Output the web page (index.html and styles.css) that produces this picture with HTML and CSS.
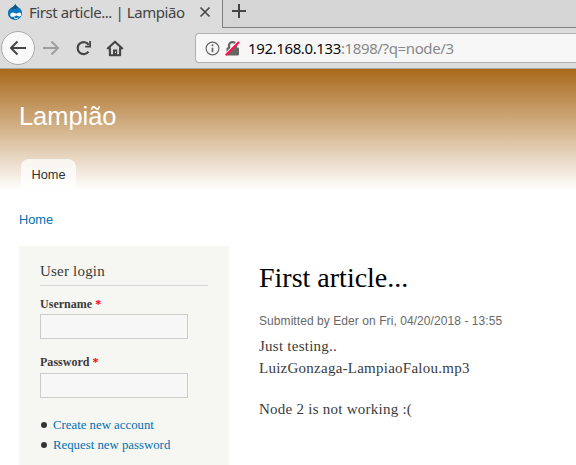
FILE: index.html
```html
<!DOCTYPE html>
<html lang="en">
<head>
<meta charset="utf-8">
<title>First article... | Lampião</title>
<link rel="stylesheet" href="styles.css">
</head>
<body>
<div class="browser">
  <div class="tabs">
    <div class="tab">
      <svg class="favicon" width="16" height="18" viewBox="0 0 16 18"><path d="M8.200 .8C9 2.800 10.700 3.700 12 4.800c2 1.400 3.100 3.100 3.100 5.300 0 3.900-3 6.800-7.100 6.800S.9 14 .9 10.100c0-2.600 1.500-4.300 3.600-5.500C6.300 3.500 7.800 2.800 8.200.8Z" fill="#0876bd"/><path d="M8.200 1c.5 1.700 1.600 2.700 3 3.500-2.100 1.600-5.500 1.200-8 2.100C5.200 4.300 7.800 3.500 8.200 1Z" fill="#16527c"/><path d="M3.200 11.800c0-1.700 1.400-2.400 2.600-2.400 1.700 0 2.600 1.200 3.600 1.200s1.700-1.200 3-1.200c1.200 0 1.900.9 1.900 1.900 0 1.400-.8 2.200-1.800 2.200-1.200 0-2-1-3-1-1.100 0-2 1.600-3.600 1.600s-2.700-1-2.700-2.300Z" fill="#fff"/><path d="M7 14.800c1.200.9 3 .9 4.200 0" fill="none" stroke="#fff" stroke-width="1"/></svg>
      <span class="tab-title">First article... | Lampião</span>
      <svg class="close" width="12" height="12" viewBox="0 0 12 12"><path d="M1.500 1.500l9 9M10.500 1.500l-9 9" stroke="#4a4a4a" stroke-width="1.700"/></svg>
    </div>
    <div class="tab-rest"><svg width="16" height="16" viewBox="0 0 16 16"><path d="M8 1v14M1 8h14" stroke="#444" stroke-width="2"/></svg></div>
  </div>
  <div class="nav">
    <div class="back"><svg width="18" height="16" viewBox="0 0 18 16"><path d="M17 8H2M8.500 1.500L2 8l6.500 6.500" fill="none" stroke="#444" stroke-width="2"/></svg></div>
    <svg class="forward" width="18" height="16" viewBox="0 0 18 16"><path d="M1 8h15M9.500 1.500L16 8l-6.500 6.500" fill="none" stroke="#9d9d9d" stroke-width="1.900"/></svg>
    <svg class="reload" width="16" height="16" viewBox="0 0 16 16"><path d="M12.500 11.700A6 6 0 1 1 12.800 5" fill="none" stroke="#444" stroke-width="2.200"/><path d="M15 1v6.500H9.200V5.700h4V1Z" fill="#444"/></svg>
    <svg class="house" width="18" height="17" viewBox="0 0 18 17"><path d="M1.200 9L9 1.700 16.800 9M3.900 7.500v7.700h10.200V7.500" fill="none" stroke="#444" stroke-width="2.100" stroke-linejoin="round"/><path d="M7 9.500h4.200V15H7Z" fill="#444"/><path d="M9 11.500h1V13H9Z" fill="#ddd"/></svg>
    <div class="address">
      <svg width="15" height="15" viewBox="0 0 15 15"><circle cx="7.500" cy="7.500" r="6.400" fill="none" stroke="#666" stroke-width="1.200"/><path d="M7.500 6.700v4.500" stroke="#666" stroke-width="1.700"/><circle cx="7.500" cy="4.200" r="1" fill="#666"/></svg>
      <svg class="lock" width="15" height="15" viewBox="0 0 15 15"><path d="M4 7V4.600a3.500 3.500 0 0 1 7 0V7" fill="none" stroke="#666" stroke-width="2.200"/><rect x="1.500" y="6.500" width="12.500" height="8" rx="1" fill="#666"/><path d="M.5 13.500L13 1" stroke="#f7f7f8" stroke-width="2.500"/><path d="M.8 14.200L14 1" stroke="#ff1148" stroke-width="2.200"/></svg>
      <span class="url"><span class="host">192.168.0.133</span>:1898/?q=node/3</span>
    </div>
  </div>
</div>
<header class="header">
  <div class="site-name">Lampião</div>
  <a class="menu-tab">Home</a>
</header>
<div class="breadcrumb"><a>Home</a></div>
<div class="columns">
  <aside class="sidebar">
    <h2>User login</h2>
    <label for="user">Username <b>*</b></label>
    <input id="user" type="text">
    <label for="pass">Password <b>*</b></label>
    <input id="pass" type="password">
    <ul><li><a>Create new account</a></li><li><a>Request new password</a></li></ul>
  </aside>
  <main class="content">
    <h1>First article...</h1>
    <div class="submitted">Submitted by Eder on Fri, 04/20/2018 - 13:55</div>
    <p>Just testing..<br>LuizGonzaga-LampiaoFalou.mp3</p>
    <p>Node 2 is not working :(</p>
  </main>
</div>
</body>
</html>
```
FILE: styles.css
```css
* { box-sizing: border-box; }
html, body { margin: 0; height: 465px; overflow: hidden; }
body { background: #fff; color: #3b3b3b; font-family: "Liberation Serif", serif; }
svg { display: block; flex: none; }
a { color: #0071b3; }
.browser { height: 69px; background: #dcdcdc; border-bottom: 1px solid #a9a9a9; font-family: "Noto Sans", sans-serif; }
.tabs { display: flex; height: 28px; }
.tab { display: flex; align-items: flex-start; width: 222px; flex: none; padding-left: 7px; }
.favicon { margin-top: 3px; }
.tab-title { width: 156px; margin: 1px 0 0 6px; font-size: 15px; line-height: 22px; letter-spacing: -.43px; white-space: nowrap; color: #444; }
.close { margin: 6px 0 0 14px; }
.tab-rest { flex: 1; padding: 3px 0 0 8px; background: #d5d5d5; border-left: 1px solid #808080; border-bottom: 1px solid #808080; }
.nav { display: flex; align-items: center; height: 40px; padding-left: 1px; }
.back { display: flex; align-items: center; justify-content: center; width: 34px; height: 34px; flex: none; border: 1px solid #aaa; border-radius: 50%; background: #f9f9f9; }
.forward { margin-left: 7px; }
.reload { margin-left: 16px; }
.house { margin-left: 14px; }
.address { display: flex; align-items: center; flex: 1; height: 30px; margin-left: 71px; padding-left: 9px; background: #f7f7f8; border: 1px solid #b0b0b0; border-right: 0; border-radius: 4px 0 0 4px; }
.lock { margin-left: 5px; }
.url { margin-left: 8px; font-size: 15px; line-height: 22px; white-space: nowrap; letter-spacing: -.38px; color: #888; }
.host { color: #0c0c0d; }
.header { height: 121px; padding: 33px 0 0 19px; background: linear-gradient(#a9691a, #fff); font-family: "Liberation Sans", sans-serif; }
.site-name { height: 57px; font-size: 25.4px; line-height: 29px; color: #fff; }
.menu-tab { display: block; width: 55px; height: 31px; margin-left: 2px; border-radius: 8px 8px 0 0; background: linear-gradient(#f8f5ef, #fff); color: #333; font-size: 12.8px; line-height: 31px; text-align: center; }
.breadcrumb { height: 56px; padding: 21px 0 0 19px; font: 12.8px/17px "Liberation Sans", sans-serif; }
.columns { display: flex; align-items: flex-start; }
.sidebar { width: 210px; height: 219px; padding: 16px 21px 0; background: #f6f6f2; border: 0; margin-left: 19px; }
.sidebar h2 { height: 24px; margin: 0 0 10px; border-bottom: 1px solid #d6d6d6; font-size: 15px; font-weight: normal; line-height: 18px; letter-spacing: .2px; }
.sidebar label { display: block; height: 18px; font-size: 12px; font-weight: bold; line-height: 16px; letter-spacing: .03px; }
.sidebar label b { color: #f00; }
.sidebar input { display: block; width: 148px; height: 25px; margin: 0 0 15px; padding: 0; background: #f7f7f7; border: 1px solid #ccc; border-radius: 0; }
.sidebar input + label { height: 19px; }
.sidebar ul { margin: 17px 0 0; padding: 0 0 0 13px; font-size: 12.8px; line-height: 20px; list-style: none; }
.sidebar li { display: flex; align-items: center; margin-left: -12px; }
.sidebar li::before { content: ""; width: 6px; height: 6px; margin-right: 6px; border-radius: 50%; background: #333; }
.content { padding: 14px 0 0 30px; }
.content h1 { margin: 0; font-size: 28px; font-weight: normal; line-height: 36px; color: #000; }
.submitted { margin: 16px 0 5px; font: 12px/18px "Liberation Sans", sans-serif; letter-spacing: .07px; color: #686868; }
.content p { margin: 0 0 19px; font-size: 15px; line-height: 22px; letter-spacing: .25px; }
```
